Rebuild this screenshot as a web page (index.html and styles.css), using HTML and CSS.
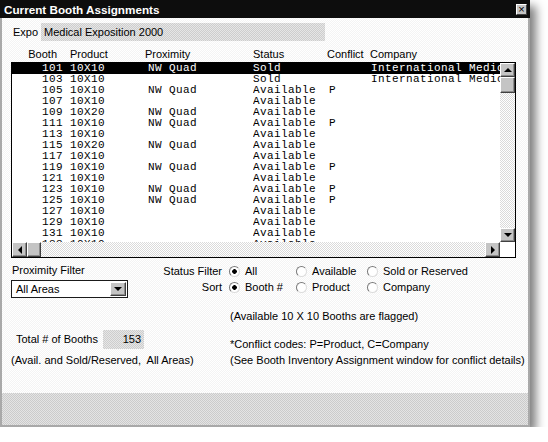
FILE: index.html
```html
<!DOCTYPE html>
<html lang="en">
<head>
  <meta charset="UTF-8">
  <meta name="viewport" content="width=device-width, initial-scale=1.0">
  <title>Current Booth Assignments</title>
  <link rel="stylesheet" href="styles.css">
</head>
<body>
  <div class="window">
    <div class="titlebar">
      <span>Current Booth Assignments</span>
      <span class="close">&times;</span>
    </div>

    <div class="content">
      <div class="expo">
        <span class="expo-label">Expo</span>
        <span class="field expo-field">Medical Exposition 2000</span>
      </div>

      <div class="cols">
        <span class="c-booth">Booth</span>
        <span class="c-product">Product</span>
        <span>Proximity</span>
        <span>Status</span>
        <span>Conflict</span>
        <span>Company</span>
      </div>

      <div class="list">
        <div class="rows">
          <div class="row selected"><span>101</span><span>10X10</span><span>NW Quad</span><span>Sold</span><span></span><span>International Medical Supply</span></div>
          <div class="row"><span>103</span><span>10X10</span><span></span><span>Sold</span><span></span><span>International Medical Supply</span></div>
          <div class="row"><span>105</span><span>10X10</span><span>NW Quad</span><span>Available</span><span>P</span><span></span></div>
          <div class="row"><span>107</span><span>10X10</span><span></span><span>Available</span><span></span><span></span></div>
          <div class="row"><span>109</span><span>10X20</span><span>NW Quad</span><span>Available</span><span></span><span></span></div>
          <div class="row"><span>111</span><span>10X10</span><span>NW Quad</span><span>Available</span><span>P</span><span></span></div>
          <div class="row"><span>113</span><span>10X10</span><span></span><span>Available</span><span></span><span></span></div>
          <div class="row"><span>115</span><span>10X20</span><span>NW Quad</span><span>Available</span><span></span><span></span></div>
          <div class="row"><span>117</span><span>10X10</span><span></span><span>Available</span><span></span><span></span></div>
          <div class="row"><span>119</span><span>10X10</span><span>NW Quad</span><span>Available</span><span>P</span><span></span></div>
          <div class="row"><span>121</span><span>10X10</span><span></span><span>Available</span><span></span><span></span></div>
          <div class="row"><span>123</span><span>10X10</span><span>NW Quad</span><span>Available</span><span>P</span><span></span></div>
          <div class="row"><span>125</span><span>10X10</span><span>NW Quad</span><span>Available</span><span>P</span><span></span></div>
          <div class="row"><span>127</span><span>10X10</span><span></span><span>Available</span><span></span><span></span></div>
          <div class="row"><span>129</span><span>10X10</span><span></span><span>Available</span><span></span><span></span></div>
          <div class="row"><span>131</span><span>10X10</span><span></span><span>Available</span><span></span><span></span></div>
          <div class="row"><span>133</span><span>10X10</span><span></span><span>Available</span><span></span><span></span></div>
        </div>
        <div class="vscroll">
          <div class="sbtn vbtn"><span class="tri up"></span></div>
          <div class="sbtn vthumb"></div>
          <div class="track"></div>
          <div class="sbtn vbtn"><span class="tri down"></span></div>
        </div>
        <div class="hscroll">
          <div class="sbtn hbtn"><span class="tri left"></span></div>
          <div class="sbtn hthumb"></div>
          <div class="track"></div>
          <div class="sbtn hbtn"><span class="tri right"></span></div>
        </div>
        <div class="corner"></div>
      </div>

      <div class="filters">
        <div class="prox">
          <div class="prox-label">Proximity Filter</div>
          <div class="select">
            <span class="select-text">All Areas</span>
            <span class="sbtn drop"><span class="tri down"></span></span>
          </div>
        </div>
        <div class="radios">
          <span class="rlabel">Status Filter</span>
          <span class="radio on">All</span>
          <span class="radio">Available</span>
          <span class="radio">Sold or Reserved</span>
          <span class="rlabel">Sort</span>
          <span class="radio on">Booth #</span>
          <span class="radio">Product</span>
          <span class="radio">Company</span>
        </div>
      </div>

      <div class="note">(Available 10 X 10 Booths are flagged)</div>

      <div class="totals">
        <div class="totals-left">
          <div class="total-row">
            <span class="total-label">Total # of Booths</span>
            <span class="field total-field">153</span>
          </div>
          <div class="avail">(Avail. and Sold/Reserved,  All Areas)</div>
        </div>
        <div class="totals-right">
          <div>*Conflict codes: P=Product, C=Company</div>
          <div class="see">(See Booth Inventory Assignment window for conflict details)</div>
        </div>
      </div>
    </div>

    <div class="band"></div>
  </div>
</body>
</html>
```

FILE: styles.css
```css
body {
  margin: 0;
  background: #fff;
  font-family: "Liberation Sans", Arial, sans-serif;
  font-size: 11px;
  color: #000;
}
.window {
  box-sizing: border-box;
  width: 530px;
  height: 427px;
  border: 2px solid #a9a9a9;
  border-top: 0;
  display: flex;
  flex-direction: column;
  background: repeating-conic-gradient(#f4f4f4 0 25%, #fff 0 50%) 0 0 / 2px 2px;
  box-shadow: 6px 6px 9px rgba(0, 0, 0, 0.5);
}
.titlebar {
  display: flex;
  align-items: center;
  height: 18px;
  margin: 0 -2px;
  padding: 0 3px 0 4px;
  background: #0d0d0d;
  color: #fff;
  font-weight: bold;
  font-size: 11.7px;
}
.close {
  margin-left: auto;
  width: 9px;
  height: 9px;
  background: #c4c4c4;
  border: 1px solid;
  border-color: #fff #404040 #404040 #fff;
  color: #000;
  font-weight: normal;
  font-size: 11px;
  line-height: 8px;
  text-align: center;
}
.content {
  flex: 1;
  display: flex;
  flex-direction: column;
  padding-left: 9px;
}

/* gray dithered read-only fields */
.field {
  background: repeating-conic-gradient(#cdcdcd 0 25%, #e6e6e6 0 50%) 0 0 / 2px 2px;
}
.expo {
  display: flex;
  margin-top: 5px;
  height: 18px;
  line-height: 18px;
}
.expo-label {
  width: 28px;
  padding-left: 2px;
}
.expo-field {
  width: 281px;
  padding-left: 3px;
}

.cols {
  display: grid;
  grid-template-columns: 46px 88px 108px 74px 43px auto;
  margin-top: 7px;
  height: 13px;
  line-height: 13px;
}
.c-booth {
  text-align: right;
}
.c-product {
  padding-left: 13px;
}

/* list box */
.list {
  display: grid;
  grid-template-columns: 1fr 15px;
  grid-template-rows: 1fr 15px;
  width: 505px;
  height: 196px;
  box-sizing: border-box;
  margin-top: 1px;
  border: 1px solid #000;
  background: #fff;
}
.rows {
  overflow: hidden;
  font-family: "Liberation Mono", "Courier New", monospace;
  font-size: 11px;
  letter-spacing: 0.4px;
}
.row {
  display: grid;
  grid-template-columns: 51px 85px 105px 76px 42px minmax(0, 1fr);
  height: 11px;
  line-height: 11px;
  white-space: nowrap;
}
.row span {
  overflow: hidden;
}
.row span:first-child {
  text-align: right;
}
.row span:nth-child(2) {
  padding-left: 7px;
}
.row.selected {
  background: #000;
  color: #fff;
}

/* scrollbars */
.sbtn {
  box-sizing: border-box;
  display: flex;
  align-items: center;
  justify-content: center;
  background: #c4c4c4;
  border: 1px solid;
  border-color: #fff #404040 #404040 #fff;
  box-shadow: inset -1px -1px #8c8c8c;
}
.track {
  flex: 1;
  background: repeating-conic-gradient(#dadada 0 25%, #fff 0 50%) 0 0 / 2px 2px;
}
.vscroll {
  display: flex;
  flex-direction: column;
}
.vbtn {
  height: 14px;
}
.vthumb {
  height: 16px;
}
.hscroll {
  display: flex;
}
.hbtn {
  width: 15px;
}
.hthumb {
  width: 14px;
}
.corner {
  background: #fff;
}
.tri {
  width: 0;
  height: 0;
  border: 4px solid transparent;
}
.tri.up {
  border-top-width: 0;
  border-bottom-color: #000;
}
.tri.down {
  border-bottom-width: 0;
  border-top-color: #000;
}
.tri.left {
  border-left-width: 0;
  border-right-color: #000;
}
.tri.right {
  border-right-width: 0;
  border-left-color: #000;
}

/* filters */
.filters {
  display: flex;
  margin-top: 5px;
}
.prox {
  width: 117px;
}
.prox-label {
  padding-left: 1px;
  height: 14px;
  line-height: 14px;
}
.select {
  display: flex;
  align-items: center;
  box-sizing: border-box;
  width: 117px;
  height: 18px;
  margin-top: 3px;
  border: 1px solid #1a1a1a;
  background: #fff;
}
.select-text {
  flex: 1;
  padding-left: 4px;
}
.drop {
  width: 16px;
  height: 14px;
  margin-right: 1px;
}
.radios {
  display: grid;
  grid-template-columns: 101px 67px 71px auto;
  grid-auto-rows: 16px;
  align-items: center;
}
.rlabel {
  text-align: right;
  padding-right: 7px;
}
.radio {
  display: flex;
  align-items: center;
  gap: 5px;
}
.radio::before {
  content: "";
  width: 9px;
  height: 9px;
  border: 1px solid;
  border-color: #7a7a7a #dcdcdc #dcdcdc #7a7a7a;
  border-radius: 50%;
  background: #fff;
}
.radio.on::before {
  background: radial-gradient(circle, #000 0 2px, #fff 2.6px);
}

.note {
  margin-top: 11px;
  padding-left: 219px;
  height: 14px;
  line-height: 14px;
}

.totals {
  display: flex;
  margin-top: 7px;
}
.totals-left {
  width: 219px;
}
.total-row {
  display: flex;
  height: 19px;
  line-height: 19px;
}
.total-label {
  width: 87px;
  padding-left: 5px;
}
.total-field {
  width: 38px;
  padding-right: 3px;
  text-align: right;
}
.avail {
  margin-top: 4px;
  line-height: 14px;
  white-space: pre;
}
.totals-right {
  padding-top: 7px;
  line-height: 14px;
}
.see {
  margin-top: 2px;
}

.band {
  height: 32px;
  background: repeating-conic-gradient(#cbcbcb 0 25%, #e4e4e4 0 50%) 0 0 / 2px 2px;
}
```
